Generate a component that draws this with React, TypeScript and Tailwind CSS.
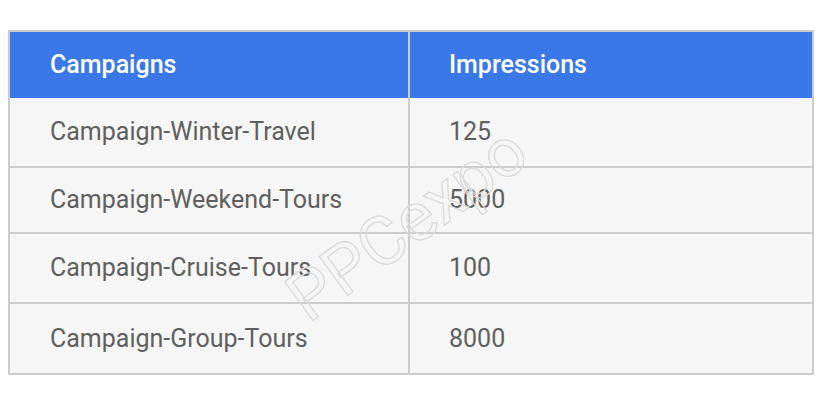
const rows = [
  { name: "Campaign-Winter-Travel", value: "125", h: "h-[70px]", last: false },
  { name: "Campaign-Weekend-Tours", value: "5000", h: "h-[66px]", last: false },
  { name: "Campaign-Cruise-Tours", value: "100", h: "h-[70px]", last: false },
  { name: "Campaign-Group-Tours", value: "8000", h: "h-[69px]", last: true },
];

export default function App() {
  return (
    <div
      className="relative w-[821px] h-[403px] bg-white pt-[30px] pl-[8px]"
      style={{ fontFamily: "Roboto, 'Liberation Sans', sans-serif" }}
    >
      <div className="w-[806px] border-2 border-[#cccccc] bg-[#f6f6f6]">
        {/* Header */}
        <div className="flex h-[66px] bg-[#3b78e7] text-white text-[25px] font-medium">
          <div className="w-[400px] flex items-center pl-[40px] border-r-2 border-[#cccccc]">
            Campaigns
          </div>
          <div className="flex-1 flex items-center pl-[39px]">Impressions</div>
        </div>

        {/* Body */}
        {rows.map((r) => (
          <div
            key={r.name}
            className={
              r.last
                ? `flex ${r.h} text-[25px] text-[#5f5f5f]`
                : `flex ${r.h} text-[25px] text-[#5f5f5f] border-b-2 border-[#cccccc]`
            }
          >
            <div className="w-[400px] flex items-center pl-[40px] border-r-2 border-[#cccccc]">
              {r.name}
            </div>
            <div className="flex-1 flex items-center pl-[39px]">{r.value}</div>
          </div>
        ))}
      </div>

      {/* Watermark */}
      <div
        className="absolute left-[407px] top-[224px] -translate-x-1/2 -translate-y-1/2 -rotate-[36deg] text-[68px] text-transparent select-none pointer-events-none"
        style={{ WebkitTextStroke: "1.3px #dadada" }}
      >
        PPCexpo
      </div>
    </div>
  );
}
